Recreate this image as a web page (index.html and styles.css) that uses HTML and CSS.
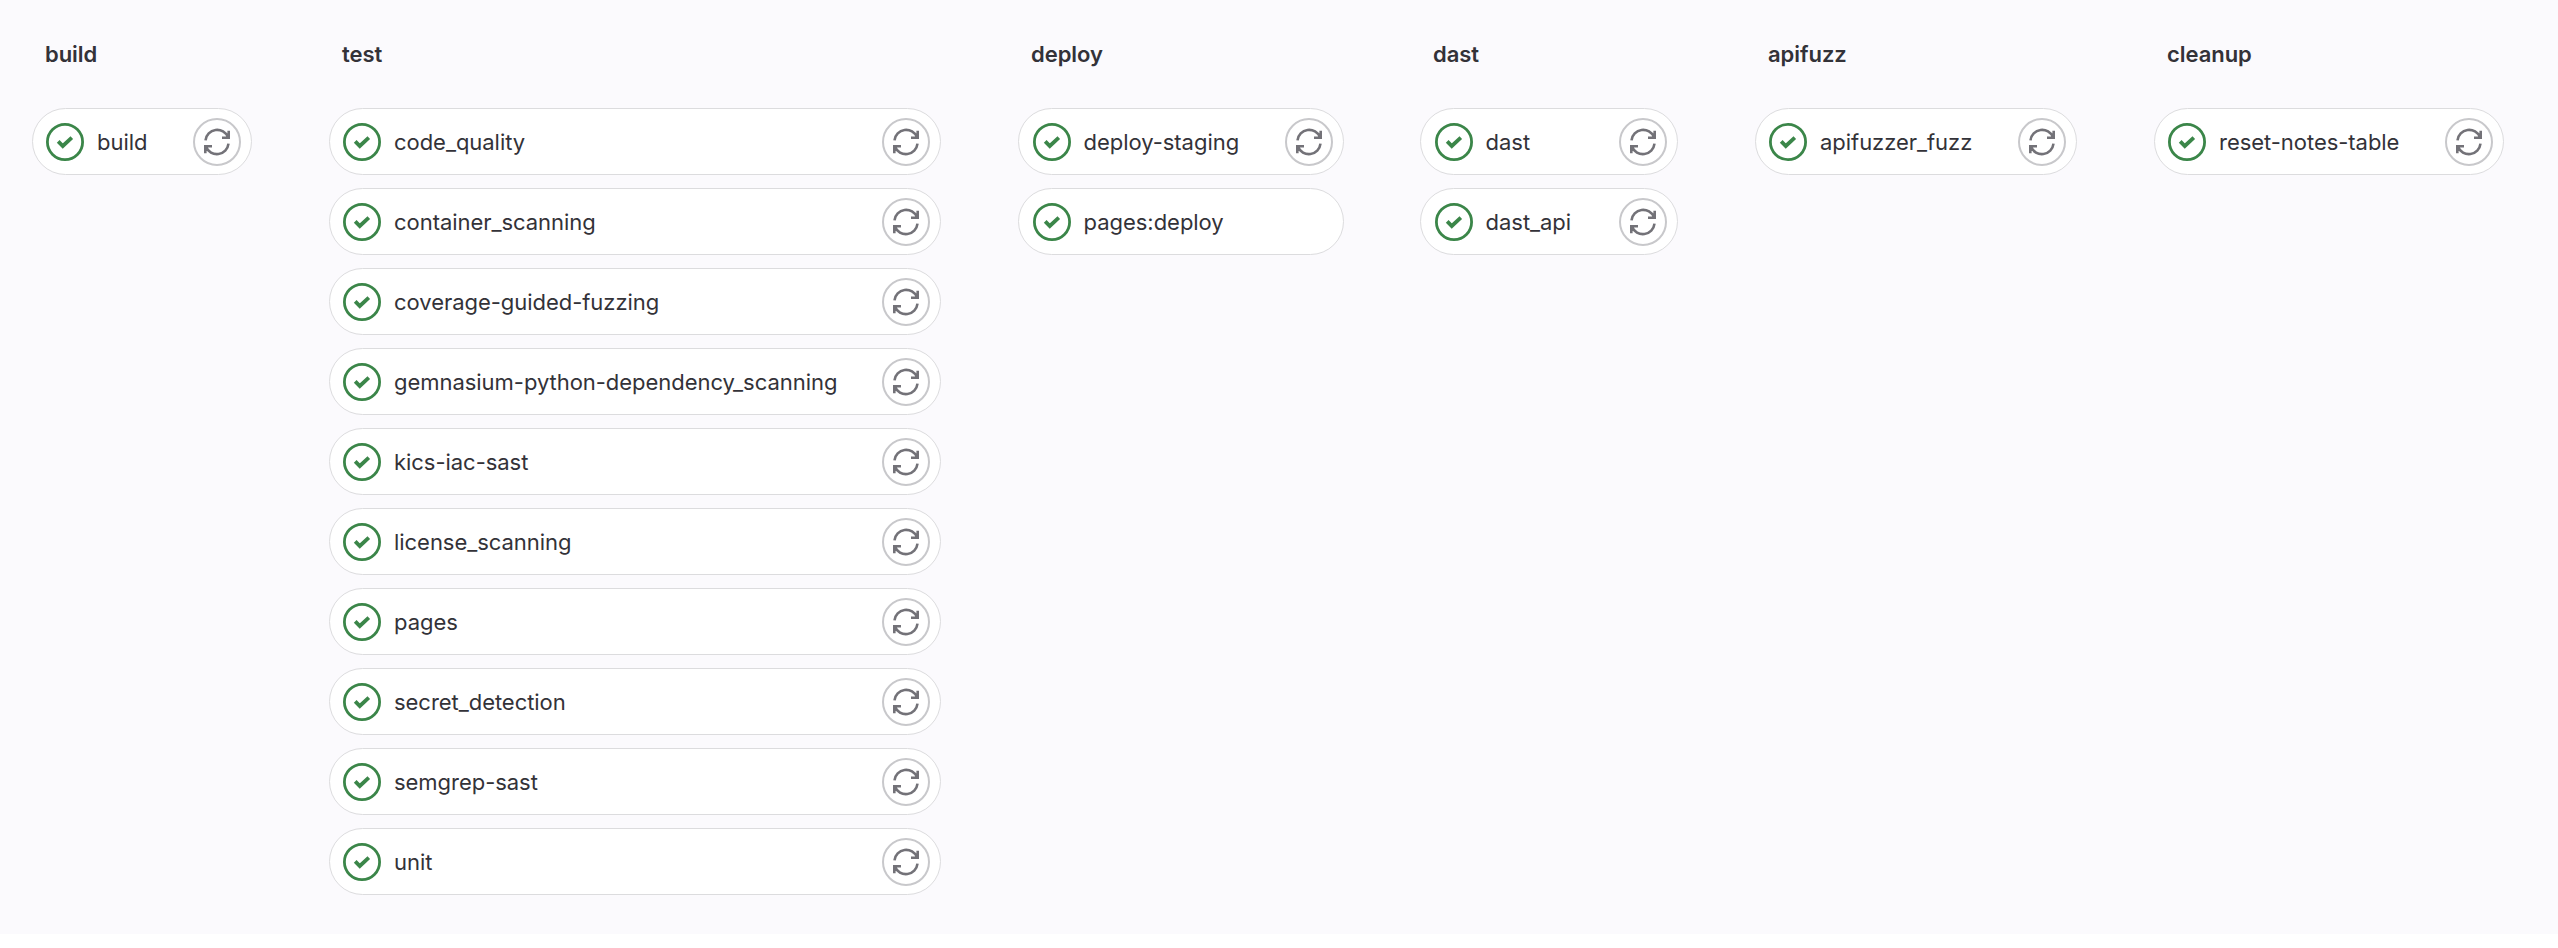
FILE: index.html
```
<!DOCTYPE html>
<html lang="en">
<head>
<meta charset="utf-8">
<title>Pipeline</title>
<link rel="stylesheet" href="styles.css">
</head>
<body>
<svg width="0" height="0" class="sprite" aria-hidden="true">
  <symbol id="check" viewBox="0 0 38 38">
    <circle cx="19" cy="19" r="17.6" fill="none" stroke="currentColor" stroke-width="2.8"/>
    <path d="M12.2 18.3l4.6 4.7 9-8.3" fill="none" stroke="currentColor" stroke-width="3.8"/>
  </symbol>
  <symbol id="retry" viewBox="-14 -14 28 28">
    <g fill="none" stroke="currentColor" stroke-width="2.6">
      <path d="M-11.5-1.7A11.7 11.7 0 0 1 11-4.8M11.7-11.2v6.9H5"/>
      <path d="M11.5 1.7A11.7 11.7 0 0 1-11 4.8M-11.7 11.2v-6.9H-5"/>
    </g>
  </symbol>
</svg>
<main class="pipeline" id="pipeline"></main>
<script src="pipeline.js"></script>
</body>
</html>
```
FILE: styles.css
```
body {
  margin: 0;
  background: #fff;
  color: #333238;
  font-family: Inter, "Liberation Sans", sans-serif;
}
.sprite { display: block; }
.pipeline {
  box-sizing: border-box;
  height: 934px;
  padding: 0 0 0 32px;
  display: flex;
  align-items: flex-start;
  gap: 77px;
  background: #fbfafd;
}
.stage { flex: none; }
.stage-build { width: 220px; }
.stage-test { width: 612px; }
.stage-deploy { width: 326px; margin-right: -1px; }
.stage-dast { width: 258px; }
.stage-apifuzz { width: 322px; }
.stage-cleanup { width: 350px; }
.stage-name {
  margin: 0;
  padding: 38px 0 38px 13px;
  font-size: 22px;
  line-height: 32px;
  font-weight: 600;
  letter-spacing: -0.05px;
}
.jobs { display: flex; flex-direction: column; gap: 13px; }
.job {
  box-sizing: border-box;
  height: 67px;
  padding: 0 10px 0 13px;
  display: flex;
  align-items: center;
  border: 1px solid #dcdcde;
  border-radius: 34px;
  background: #fff;
}
.stage-deploy .job, .stage-dast .job { padding-left: 13.6px; }
.status { flex: none; width: 38px; height: 38px; color: #3b8649; }
.job-name {
  flex: 1;
  margin-left: 13px;
  font-size: 22px;
  line-height: 32px;
  letter-spacing: -0.04px;
  white-space: nowrap;
}
.retry {
  box-sizing: border-box;
  flex: none;
  width: 48px;
  height: 48px;
  padding: 0;
  display: flex;
  align-items: center;
  justify-content: center;
  border: 2px solid #c8c8cb;
  border-radius: 50%;
  background: #fff;
  color: #737278;
}
.retry svg { flex: none; width: 28px; height: 28px; overflow: visible; }
```
FILE: pipeline.js
```
const stages = [
  ["build", ["build"]],
  ["test", ["code_quality", "container_scanning", "coverage-guided-fuzzing",
    "gemnasium-python-dependency_scanning", "kics-iac-sast", "license_scanning",
    "pages", "secret_detection", "semgrep-sast", "unit"]],
  ["deploy", ["deploy-staging", "pages:deploy"]],
  ["dast", ["dast", "dast_api"]],
  ["apifuzz", ["apifuzzer_fuzz"]],
  ["cleanup", ["reset-notes-table"]],
];
const notRetryable = new Set(["pages:deploy"]);

const job = (name) => `<div class="job">
  <svg class="status"><use href="#check"/></svg>
  <span class="job-name">${name}</span>
  ${notRetryable.has(name) ? "" : '<button class="retry" aria-label="Retry"><svg><use href="#retry"/></svg></button>'}
</div>`;

document.getElementById("pipeline").innerHTML = stages.map(([name, jobs]) =>
  `<section class="stage stage-${name}">
    <h2 class="stage-name">${name}</h2>
    <div class="jobs">${jobs.map(job).join("")}</div>
  </section>`).join("");
```
